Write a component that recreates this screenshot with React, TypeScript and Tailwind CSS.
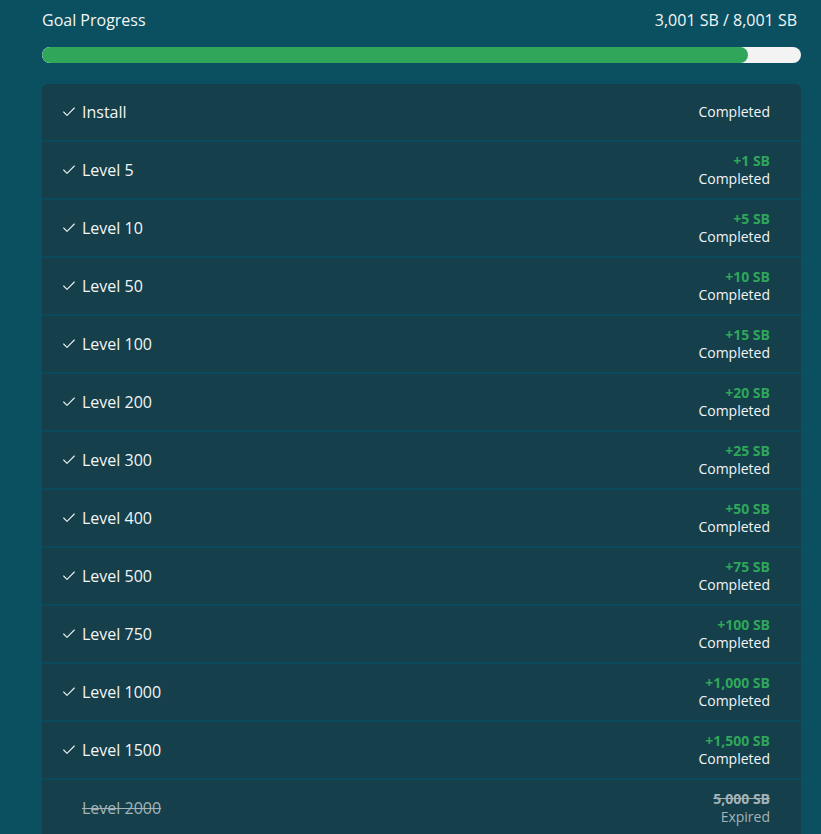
import { Check } from "lucide-react";

type Goal = { name: string; reward?: string; status: "done" | "expired" };

const goals: Goal[] = [
  { name: "Install", status: "done" },
  { name: "Level 5", reward: "+1 SB", status: "done" },
  { name: "Level 10", reward: "+5 SB", status: "done" },
  { name: "Level 50", reward: "+10 SB", status: "done" },
  { name: "Level 100", reward: "+15 SB", status: "done" },
  { name: "Level 200", reward: "+20 SB", status: "done" },
  { name: "Level 300", reward: "+25 SB", status: "done" },
  { name: "Level 400", reward: "+50 SB", status: "done" },
  { name: "Level 500", reward: "+75 SB", status: "done" },
  { name: "Level 750", reward: "+100 SB", status: "done" },
  { name: "Level 1000", reward: "+1,000 SB", status: "done" },
  { name: "Level 1500", reward: "+1,500 SB", status: "done" },
  { name: "Level 2000", reward: "5,000 SB", status: "expired" },
];

function GoalRow({ goal }: { goal: Goal }) {
  const expired = goal.status === "expired";
  return (
    <div className="h-[56px] flex items-center justify-between bg-[#153f4a] pl-[19px] pr-[31px]">
      <div className="flex items-center gap-[5px]">
        <span className="w-[16px] flex justify-center">
          {!expired && <Check size={16} strokeWidth={1.6} className="text-[#eef2f3]" />}
        </span>
        <span className={`text-[16px] ${expired ? "text-[#a3b3b8] line-through" : "text-[#f3f5f6]"}`}>{goal.name}</span>
      </div>
      <div className="flex flex-col items-end leading-[18px]">
        {goal.reward && (
          <span className={`text-[14px] font-bold ${expired ? "text-[#a3b3b8] line-through" : "text-[#2fa65a]"}`}>{goal.reward}</span>
        )}
        <span className={`text-[14px] ${expired ? "text-[#a3b3b8]" : "text-[#f3f5f6]"}`}>{expired ? "Expired" : "Completed"}</span>
      </div>
    </div>
  );
}

export default function App() {
  return (
    <div className="min-h-screen h-[834px] overflow-hidden bg-[#0a5060] pl-[42px] pr-[20px] pt-[8px]" style={{ fontFamily: "'Open Sans', sans-serif" }}>
      <div className="flex items-center justify-between h-[24px] pr-[4px]">
        <span className="text-[16px] text-[#f3f5f6]">Goal Progress</span>
        <span className="text-[16px] text-[#f3f5f6]">3,001 SB / 8,001 SB</span>
      </div>
      <div className="mt-[15px] h-[16px] rounded-full bg-[#f3f3f3] overflow-hidden">
        <div className="h-full w-[93%] rounded-full bg-[#2fa65a]" />
      </div>
      <div className="mt-[21px] rounded-t-[6px] overflow-hidden flex flex-col gap-[2px] bg-[#0b4a5a]">
        {goals.map((g) => (
          <GoalRow key={g.name} goal={g} />
        ))}
      </div>
    </div>
  );
}
